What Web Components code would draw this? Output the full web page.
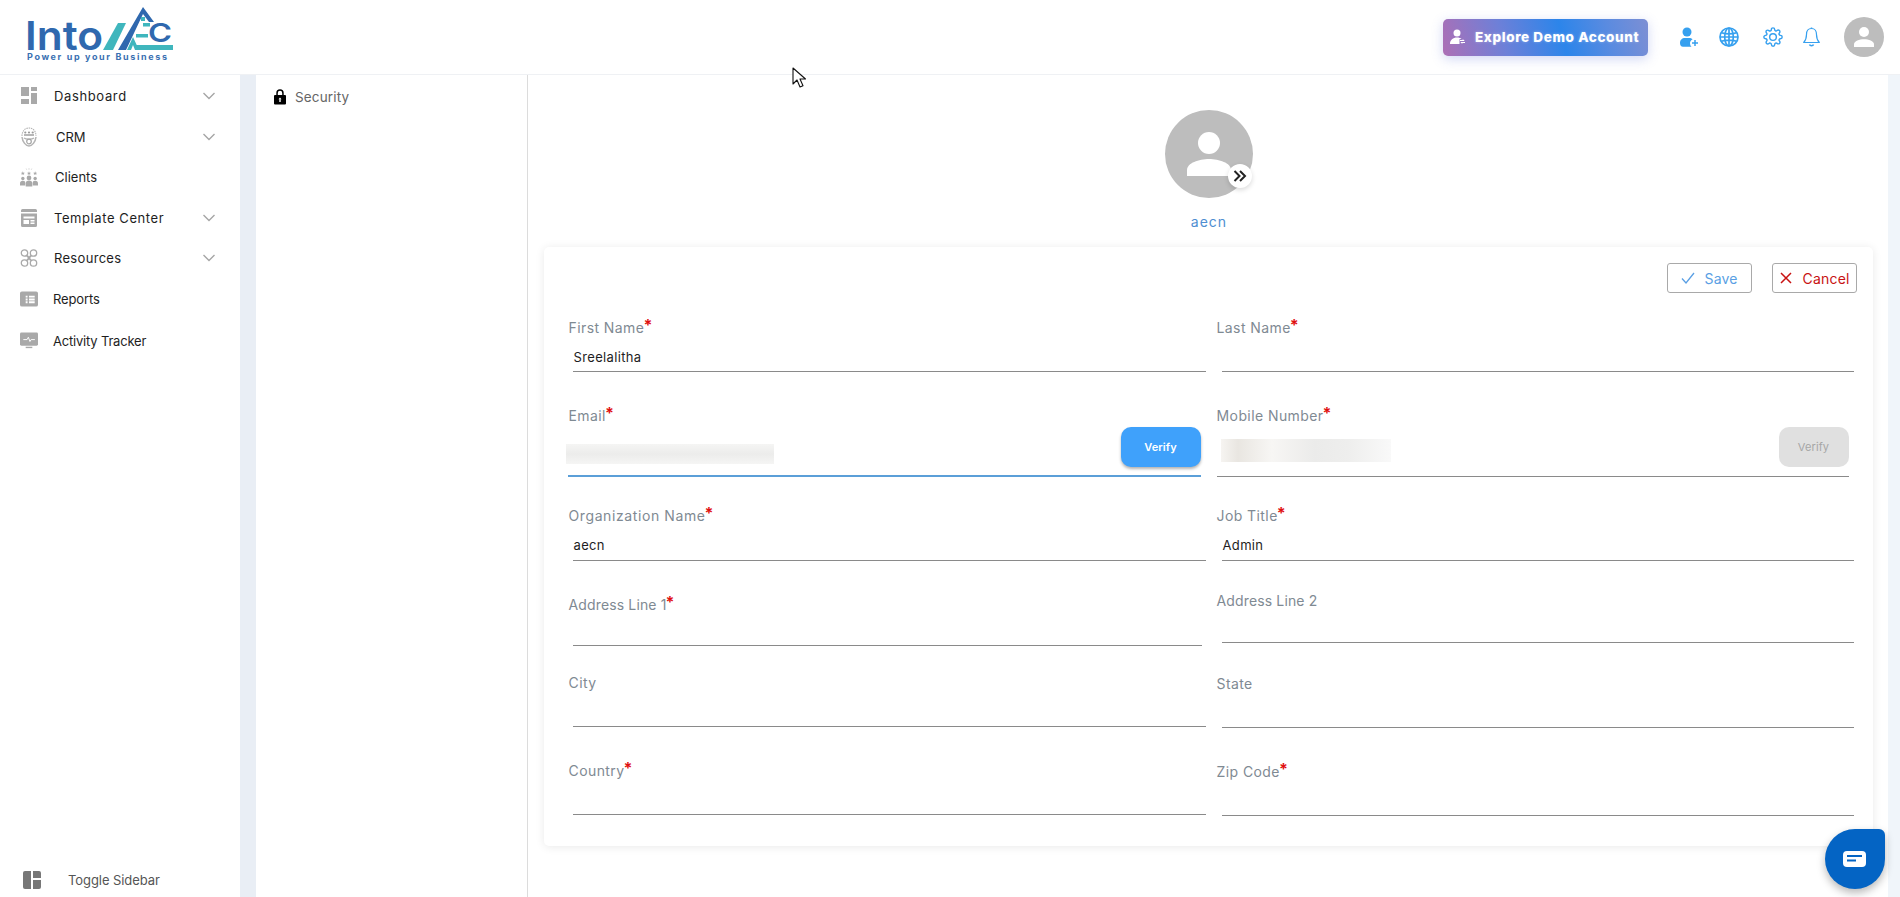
<!doctype html>
<html>
<head>
<meta charset="utf-8">
<title>IntoAEC</title>
<style>
  html, body { margin: 0; height: 897px; overflow: hidden; background: #fff; font-family: Inter, "Liberation Sans", sans-serif; }
</style>
</head>
<body>
<app-shell>
  <top-bar slot="top"></top-bar>
  <side-nav slot="nav">
    <nav-item label="Dashboard" icon="dashboard" chevron style="--ls:.63px"></nav-item>
    <nav-item label="CRM" icon="crm" chevron style="--lx:17px;--ix:21px;--ls:0"></nav-item>
    <nav-item label="Clients" icon="clients" style="--lx:17px;--ls:.01px"></nav-item>
    <nav-item label="Template Center" icon="template" chevron style="--ls:.58px"></nav-item>
    <nav-item label="Resources" icon="resources" chevron style="--ls:.31px"></nav-item>
    <nav-item label="Reports" icon="reports" style="--lx:15px;--ls:-.12px"></nav-item>
    <nav-item label="Activity Tracker" icon="activity" style="--lx:15px;--mt:2px;--ls:-.2px"></nav-item>
    <nav-item slot="foot" label="Toggle Sidebar" icon="toggle" style="--ix:23px;--lx:27px;--color:#555;--row:34px;--ls:-.07px"></nav-item>
  </side-nav>
  <sub-panel slot="panel"></sub-panel>
  <profile-main slot="main">
    <form-field label="First Name" required style="--h:55px">Sreelalitha</form-field>
    <form-field slot="right" label="Last Name" required style="--h:55px;--ml:6px"></form-field>

    <form-field label="Email" required focus style="--h:72px;--mt:33px;--ml:0px;--mr:5px">
      <blur-value style="--w:208px;--top:19px;--bh:20px;--left:-3px"></blur-value>
      <verify-button></verify-button>
    </form-field>
    <form-field slot="right" label="Mobile Number" required style="--h:72px;--mt:33px;--ml:1px;--mr:5px">
      <blur-value warm style="--w:170px;--top:14px;--bh:23px;--left:3px"></blur-value>
      <verify-button disabled></verify-button>
    </form-field>

    <form-field label="Organization Name" required style="--h:56px;--mt:28px;--ls:.6px;--pb:5px">aecn</form-field>
    <form-field slot="right" label="Job Title" required style="--h:56px;--mt:28px;--ml:6px;--pb:5px">Admin</form-field>

    <form-field label="Address Line 1" required style="--h:52px;--mt:33px;--mr:4px;--ls:.14px"></form-field>
    <form-field slot="right" label="Address Line 2" style="--h:52px;--mt:30px;--ml:6px;--ls:.14px"></form-field>

    <form-field label="City" style="--h:54px;--mt:27px"></form-field>
    <form-field slot="right" label="State" style="--h:54px;--mt:31px;--ml:6px"></form-field>

    <form-field label="Country" required style="--h:55px;--mt:33px"></form-field>
    <form-field slot="right" label="Zip Code" required style="--h:55px;--mt:33px;--ml:6px"></form-field>
  </profile-main>
  <chat-bubble slot="over"></chat-bubble>
  <mouse-cursor slot="over"></mouse-cursor>
</app-shell>

<script>
(function() {

  const person = `
    <circle cx="44" cy="44" r="44" fill="#bdbdbd"/>
    <circle cx="44" cy="33" r="11" fill="#fff"/>
    <path d="M22 66v-6c0-7 12-11 22-11s22 4 22 11v6z" fill="#fff"/>`;

  const star = (x, y) => `<path d="M${x} ${y - 2}l.6 1.400 1.500.1-1.100 1 .4 1.500-1.400-.8-1.400.8.4-1.500-1.100-1 1.500-.1z"/>`;

  const Icons = {
    dashboard: `<svg width="18" height="18" viewBox="0 0 18 18" fill="#a9a9a9"><rect x="1" y="0" width="8" height="9"/><rect x="11" y="0" width="6" height="4"/><rect x="1" y="12" width="8" height="5"/><rect x="11" y="6" width="6" height="11"/></svg>`,
    crm: `<svg width="16" height="20" viewBox="0 0 16 20" fill="none" stroke="#b4b4b4"><path d="M1 9c0-5 3-8 7-8s7 3 7 8" stroke-width="1.100" stroke-dasharray="1.500 .8"/><circle cx="4.300" cy="5.500" r="1.100" fill="#999" stroke="none"/><circle cx="8" cy="5.500" r="1.100" fill="#999" stroke="none"/><circle cx="11.700" cy="5.500" r="1.100" fill="#999" stroke="none"/><path d="M3 8h10" stroke-width="1.600" stroke="#a5a5a5"/><path d="M1 10c.500 5 4 9 7 9s6.500-4 7-9" stroke-width="1.500"/><path d="M3 11c2 1.500 8 1.500 10 0" stroke-width="1.400"/><circle cx="8" cy="14.500" r="2.300" stroke-width="1.200" stroke="#a5a5a5"/></svg>`,
    clients: `<svg width="19" height="20" viewBox="0 0 19 20" fill="#a9a9a9"><path d="M9.500 .5v2M6.500 1l.7 1.500M12.500 1l-.7 1.500" stroke="#c4c4c4" stroke-width=".6"/>${star(3, 6)}${star(9.5, 6)}${star(16, 6)}<circle cx="3" cy="11.500" r="1.800"/><circle cx="16" cy="11.500" r="1.800"/><circle cx="9.500" cy="11" r="2.500"/><path d="M0 19v-2c0-2 1-3 3-3s2.500 1 2.500 2v3zM13.500 19v-3c0-1 .5-2 2.500-2s3 1 3 3v2z"/><path d="M6 20v-3.500c0-2 1.500-2.900 3.500-2.900s3.500.9 3.500 2.900V20z"/></svg>`,
    template: `<svg width="18" height="18" viewBox="0 0 18 18" fill="#a9a9a9"><path d="M1 1.500A1.500 1.500 0 0 1 2.500 0h13A1.500 1.500 0 0 1 17 1.500V3H1z"/><path fill-rule="evenodd" d="M1 4.500h16V16.500A1.500 1.500 0 0 1 15.500 18h-13A1.500 1.500 0 0 1 1 16.500zM3.500 7.500v2h11v-2zM3.500 11v4h5.500v-4zM10.500 11v1.500h4V11zM10.500 13.500V15h4v-1.500z"/></svg>`,
    resources: `<svg width="18" height="18" viewBox="0 0 18 18" fill="none" stroke="#a9a9a9" stroke-width="1.300"><circle cx="4.500" cy="4" r="3.200"/><circle cx="13.500" cy="4" r="3.200"/><circle cx="4.500" cy="14" r="3.200"/><circle cx="13.500" cy="14" r="3.200"/><path d="M7 6.500l4 5M11 6.500l-4 5" stroke-width="2"/></svg>`,
    reports: `<svg width="19" height="16" viewBox="0 0 19 16" fill="#a9a9a9"><path fill-rule="evenodd" d="M2 0h15a2 2 0 0 1 2 2v12a2 2 0 0 1-2 2H2a2 2 0 0 1-2-2V2a2 2 0 0 1 2-2zM6 4.500V6.500h2V4.500zM9.500 4.500V6.500h6V4.500zM6 7.500V9.500h2V7.500zM9.500 7.500V9.500h6V7.500zM6 10.500v2h2v-2zM9.500 10.500v2h6v-2z"/></svg>`,
    activity: `<svg width="19" height="19" viewBox="0 0 19 19" fill="#a9a9a9"><rect x="0" y="0" width="19" height="14" rx="1.500"/><rect x="6" y="15" width="7" height="1.500"/><path d="M3.500 7.500h4l1.300-2.500 1.700 4.500 1.200-2h4" fill="none" stroke="#fff" stroke-width="1"/></svg>`,
    toggle: `<svg width="18" height="18" viewBox="0 0 18 18" fill="#777"><path d="M2 0h6v18H2a2 2 0 0 1-2-2V2a2 2 0 0 1 2-2z"/><path d="M10 0h6a2 2 0 0 1 2 2v5h-8z"/><path d="M10 9h8v7a2 2 0 0 1-2 2h-6z"/></svg>`
  };

  function define(name, css, html) {
    customElements.define(name, class extends HTMLElement {
      constructor() {
        super();
        this.attachShadow({ mode: 'open' }).innerHTML =
          `<style>${css}</style>${typeof html === 'function' ? html(this) : html}`;
      }
    });
  }

  define('app-shell', `
    :host { display: grid; grid-template-rows: 75px 822px; grid-template-columns: 240px 16px 272px 1fr 12px; width: 1900px; height: 897px; position: relative; overflow: hidden; }
    ::slotted([slot=top]) { grid-column: 1 / -1; }
    .gutter { background: #e9eef5; }
    .gutter.right { background: #f0f5fa; grid-column: 5; grid-row: 2; }
  `, `
    <slot name="top"></slot>
    <slot name="nav"></slot>
    <div class="gutter"></div>
    <slot name="panel"></slot>
    <slot name="main"></slot>
    <div class="gutter right"></div>
    <slot name="over"></slot>
  `);

  define('top-bar', `
    :host { display: flex; align-items: center; height: 75px; box-sizing: border-box; border-bottom: 1px solid #eff1f4; background: #fff; padding-right: 16px; }
    .logo { display: block; margin-right: auto; }
    .demo { display: flex; align-items: center; width: 205px; height: 37px; box-sizing: border-box; padding-left: 7px; gap: 9px; border-radius: 5px; color: #fff; font-size: 13.500px; font-weight: 800; letter-spacing: .62px; white-space: nowrap;
      background: linear-gradient(75deg, #ad6fb5 0%, #6d80d8 30%, #2c85ea 58%, #5a8be0 80%, #7d8fd4 100%);
      box-shadow: 0 3px 12px rgba(90, 110, 220, .28); text-shadow: 0 0 3px rgba(255,255,255,.35); }
    svg.i { display: block; flex: none; }
    .avatar { display: block; }
  `, `
    <svg class="logo" width="190" height="74" viewBox="0 0 190 74">
      <text x="25" y="50" font-family="Inter, sans-serif" font-size="40" font-weight="600" fill="#2f68ae" textLength="78" lengthAdjust="spacingAndGlyphs">Into</text>
      <path d="M103 50l15-27h8l-13 27z" fill="#3fb6bd"/>
      <path d="M118 50L143 7l11 15h-5l-6-8-17 36z" fill="#2f68ae"/>
      <path d="M141 17h4v4h-4z" fill="#3fb6bd"/>
      <path d="M127 50l6-13 6 13h-4l-2-5-2 5z" fill="#3fb6bd"/>
      <rect x="143" y="23" width="7" height="3.500" fill="#3fb6bd"/><rect x="136" y="34" width="12" height="3.500" fill="#3fb6bd"/>
      <rect x="135" y="45" width="38" height="5" fill="#3fb6bd"/>
      <text x="148" y="42" font-family="Inter, sans-serif" font-size="26" font-weight="600" fill="#2f68ae" textLength="24" lengthAdjust="spacingAndGlyphs">C</text>
      <text x="27" y="60" font-family="Inter, sans-serif" font-size="9" font-weight="700" fill="#3a70b2" textLength="140">Power up your Business</text>
    </svg>
    <div class="demo">
      <svg class="i" width="16" height="16" viewBox="0 0 16 16" fill="#fff"><circle cx="7" cy="4" r="3.500"/><path d="M0 15c0-4 3-6.500 7-6.500 2 0 3.500.5 4.500 1.500H9.500v5z"/><path d="M10 11.500h4l-1-1M15 13.500h-4l1 1" stroke="#fff" fill="none"/></svg>
      <span>Explore Demo Account</span>
    </div>
    <svg class="i" style="margin-left:32px" width="18" height="20" viewBox="0 0 18 20" fill="#36a0ef"><circle cx="7" cy="5" r="4.500"/><path d="M0 16c0-3 2-5 5-5h4c2 0 3 .5 3.500 1.500-1.500.5-2.500 2-2.500 3.500 0 1.500.5 3 1.500 3.800H3c-2 0-3-1.500-3-3.800z"/><path d="M15 13v6M12 16h6" stroke="#36a0ef" stroke-width="1.500"/></svg>
    <svg class="i" style="margin-left:21px" width="20" height="20" viewBox="0 0 20 20" fill="none" stroke="#36a0ef" stroke-width="1.700"><circle cx="10" cy="10" r="9"/><ellipse cx="10" cy="10" rx="4.300" ry="9"/><path d="M2.500 5.800c4 1.500 11 1.500 15 0M2.500 14.200c4-1.500 11-1.500 15 0M1 10h18M10 1v18"/></svg>
    <svg class="i" style="margin-left:24px" width="20" height="20" viewBox="0 0 24 24" fill="none" stroke="#36a0ef" stroke-width="1.700" stroke-linejoin="round"><circle cx="12" cy="12" r="4"/><path d="M19.400 15a1.650 1.650 0 0 0 .33 1.820l.06.06a2 2 0 0 1 0 2.830 2 2 0 0 1-2.830 0l-.06-.06a1.650 1.650 0 0 0-1.820-.33 1.650 1.650 0 0 0-1 1.510V21a2 2 0 0 1-2 2 2 2 0 0 1-2-2v-.09A1.650 1.650 0 0 0 9 19.400a1.650 1.650 0 0 0-1.820.33l-.06.06a2 2 0 0 1-2.830 0 2 2 0 0 1 0-2.830l.06-.06a1.650 1.650 0 0 0 .33-1.820 1.650 1.650 0 0 0-1.510-1H3a2 2 0 0 1-2-2 2 2 0 0 1 2-2h.09A1.650 1.650 0 0 0 4.600 9a1.650 1.650 0 0 0-.33-1.820l-.06-.06a2 2 0 0 1 0-2.830 2 2 0 0 1 2.830 0l.06.06a1.650 1.650 0 0 0 1.820.33H9a1.650 1.650 0 0 0 1-1.510V3a2 2 0 0 1 2-2 2 2 0 0 1 2 2v.09a1.650 1.650 0 0 0 1 1.510 1.650 1.650 0 0 0 1.820-.33l.06-.06a2 2 0 0 1 2.830 0 2 2 0 0 1 0 2.830l-.06.06a1.650 1.650 0 0 0-.33 1.820V9a1.650 1.650 0 0 0 1.510 1H21a2 2 0 0 1 2 2 2 2 0 0 1-2 2h-.09a1.650 1.650 0 0 0-1.510 1z"/></svg>
    <svg class="i" style="margin-left:20px" width="17" height="21" viewBox="0 0 17 21" fill="none" stroke="#36a0ef" stroke-width="1.200" stroke-linejoin="round"><path d="M8.500 1.500c-3.500 0-5 2.800-5 6 0 4-1 6-2.800 8h15.600c-1.800-2-2.800-4-2.800-8 0-3.200-1.500-6-5-6z"/><path d="M8.500 .5v1M6.500 17.500c.5 1.500 3.500 1.500 4 0" stroke-width="1.500"/></svg>
    <svg class="avatar" style="margin-left:24px" width="40" height="40" viewBox="0 0 88 88">${person}</svg>
  `);

  define('side-nav', `
    :host { display: flex; flex-direction: column; background: #fff; }
    .list { display: flex; flex-direction: column; flex: 1; padding-top: 1px; }
  `, `
    <div class="list"><slot></slot></div>
    <slot name="foot"></slot>
  `);

  define('nav-item', `
    :host { display: flex; align-items: center; height: var(--row, 40.500px); margin-top: var(--mt, 0); padding-left: var(--ix, 20px); padding-right: 24px; color: var(--color, #1e1e1e); font-size: 13px; letter-spacing: var(--ls, .18px); }
    .icon { width: 18px; height: 20px; display: flex; align-items: center; justify-content: flex-start; flex: none; }
    .label { margin-left: var(--lx, 16px); flex: 1; white-space: nowrap; }
    svg.chev { display: block; flex: none; }
  `, self => `
    <span class="icon">${Icons[self.getAttribute('icon')] || ''}</span>
    <span class="label">${self.getAttribute('label')}</span>
    ${self.hasAttribute('chevron') ? '<svg class="chev" width="14" height="8" viewBox="0 0 14 8" fill="none" stroke="#a6a6a6" stroke-width="1.400"><path d="M1.500 1l5.500 5.500L12.500 1"/></svg>' : ''}
  `);

  define('sub-panel', `
    :host { display: block; background: #fff; border-right: 1px solid #dcdcdc; box-sizing: border-box; padding: 12px 0 0 18px; }
    .row { display: flex; align-items: center; gap: 9px; height: 20px; color: #666; font-size: 13.500px; letter-spacing: .15px; }
    svg { display: block; }
  `, `
    <div class="row">
      <svg width="12" height="16" viewBox="0 0 12 16"><path fill-rule="evenodd" d="M2.300 6V4a3.700 3.700 0 0 1 7.400 0v2H11a1 1 0 0 1 1 1v7.500a1 1 0 0 1-1 1H1a1 1 0 0 1-1-1V7a1 1 0 0 1 1-1zM3.800 6h4.400V4a2.200 2.200 0 0 0-4.400 0zM5.300 10v3h1.400v-3l1 .6L6 8.500 4.300 10.600z"/></svg>
      <span>Security</span>
    </div>
  `);

  define('profile-main', `
    :host { display: flex; flex-direction: column; align-items: center; padding-top: 35px; box-sizing: border-box; background: #fff; min-width: 0; }
    .avatar { position: relative; width: 88px; height: 88px; margin-left: 2px; }
    .avatar svg.big { display: block; }
    .badge { position: absolute; left: 63px; top: 54px; width: 24px; height: 24px; border-radius: 50%; background: #fff; box-shadow: 0 2px 5px rgba(0,0,0,.15); display: flex; align-items: center; justify-content: center; }
    .name { margin: 14px 0 0 2px; height: 20px; line-height: 20px; font-size: 14px; letter-spacing: 1px; color: #4f8ed1; }
    .card { margin-top: 15px; width: 1329px; box-sizing: border-box; padding: 16px 16px 30px 24px; background: #fff; border-radius: 5px; box-shadow: 0 1px 10px rgba(0,0,0,.09); }
    .actions { display: flex; justify-content: flex-end; gap: 20px; }
    .btn { display: flex; align-items: center; height: 30px; box-sizing: border-box; border: 1px solid #a9a9a9; border-radius: 3px; font-size: 14px; letter-spacing: .2px; white-space: nowrap; }
    .save { width: 85px; color: #5a9fe4; padding-left: 13px; gap: 10px; }
    .cancel { width: 85px; color: #c81212; padding-left: 7px; gap: 11px; }
    .form { margin-top: 24px; display: grid; grid-template-columns: 638px 638px; column-gap: 10px; }
    .col { display: flex; flex-direction: column; }
  `, `
    <div class="avatar">
      <svg class="big" width="88" height="88" viewBox="0 0 88 88">${person}</svg>
      <div class="badge"><svg width="14" height="12" viewBox="0 0 14 12" fill="none" stroke="#222" stroke-width="2"><path d="M1.500 1l5 5-5 5M7 1l5 5-5 5"/></svg></div>
    </div>
    <div class="name">aecn</div>
    <div class="card">
      <div class="actions">
        <div class="btn save"><svg width="14" height="12" viewBox="0 0 14 12" fill="none" stroke="#5a9fe4" stroke-width="1.300"><path d="M1 6.500l4 4.500 8-10"/></svg><span>Save</span></div>
        <div class="btn cancel"><svg width="12" height="12" viewBox="0 0 12 12" fill="none" stroke="#c81212" stroke-width="1.500"><path d="M1 1l10 10M11 1L1 11"/></svg><span>Cancel</span></div>
      </div>
      <div class="form">
        <div class="col"><slot></slot></div>
        <div class="col"><slot name="right"></slot></div>
      </div>
    </div>
  `);

  define('form-field', `
    :host { display: flex; flex-direction: column; height: var(--h, 55px); margin-top: var(--mt, 0); box-sizing: border-box; }
    .label { height: 20px; line-height: 20px; margin-left: 1px; font-size: 14px; letter-spacing: var(--ls, .42px); color: #7f8a93; white-space: nowrap; flex: none; }
    .label b { color: #e01010; font-weight: 700; font-size: 16px; position: relative; top: -2px; margin-left: -1px; }
    .control { flex: 1; display: flex; align-items: flex-end; justify-content: space-between; margin-left: var(--ml, 5px); margin-right: var(--mr, 0); padding: 0 0 var(--pb, 4px) 1px; box-sizing: border-box; border-bottom: 1px solid #8a8a8a; color: #1e1e1e; font-size: 13px; letter-spacing: .35px; line-height: 20px; position: relative; }
    :host([focus]) .control { border-bottom: 2px solid #5b9fd8; }
  `, self => `
    <div class="label">${self.getAttribute('label')}${self.hasAttribute('required') ? '<b>*</b>' : ''}</div>
    <div class="control"><slot></slot></div>
  `);

  define('verify-button', `
    :host { display: flex; align-items: center; justify-content: center; align-self: flex-start; margin-top: 2px; flex: none; width: 80px; height: 40px; margin-bottom: -4px; box-sizing: border-box; border-radius: 10px; background: #3fa1fb; color: #fff; font-size: 11px; font-weight: 600; letter-spacing: .1px; box-shadow: 0 2px 3px rgba(0,0,0,.3); }
    :host([disabled]) { width: 70px; background: #e0e0e0; color: #a6a6a6; font-weight: 400; box-shadow: none; }
  `, `<span>Verify</span>`);

  define('blur-value', `
    :host { display: block; align-self: flex-start; flex: none; width: var(--w); height: var(--bh); margin-top: var(--top); margin-left: var(--left); background: linear-gradient(#f5f5f4, #ececeb 50%, #f5f5f4); }
    :host([warm]) { background: linear-gradient(90deg, #f6f4f1, #e9e6e1 10%, #f7f6f4 30%, #ebebea 55%, #eeeeed 75%, #f9f9f9 100%); }
  `, ``);

  define('chat-bubble', `
    :host { position: absolute; left: 1825px; top: 829px; width: 60px; height: 60px; background: #0464c4; border-radius: 30px 6px 30px 30px; box-shadow: 0 4px 8px rgba(0,0,0,.28); display: flex; align-items: center; justify-content: center; }
    svg { display: block; }
  `, `<svg width="24" height="16" viewBox="0 0 24 16"><rect width="23" height="16" rx="4" fill="#fff"/><path d="M4 5h15M4 9.500h9" stroke="#0464c4" stroke-width="1.800"/></svg>`);

  define('mouse-cursor', `
    :host { position: absolute; left: 792px; top: 67px; width: 16px; height: 22px; }
    svg { display: block; }
  `, `<svg width="16" height="22" viewBox="0 0 16 22"><path d="M1 1v16l4-4 3 7 3-1.300-3-6.700h5.500z" fill="#fff" stroke="#111" stroke-width="1.100" stroke-linejoin="round"/></svg>`);

}());
</script>
</body>
</html>
